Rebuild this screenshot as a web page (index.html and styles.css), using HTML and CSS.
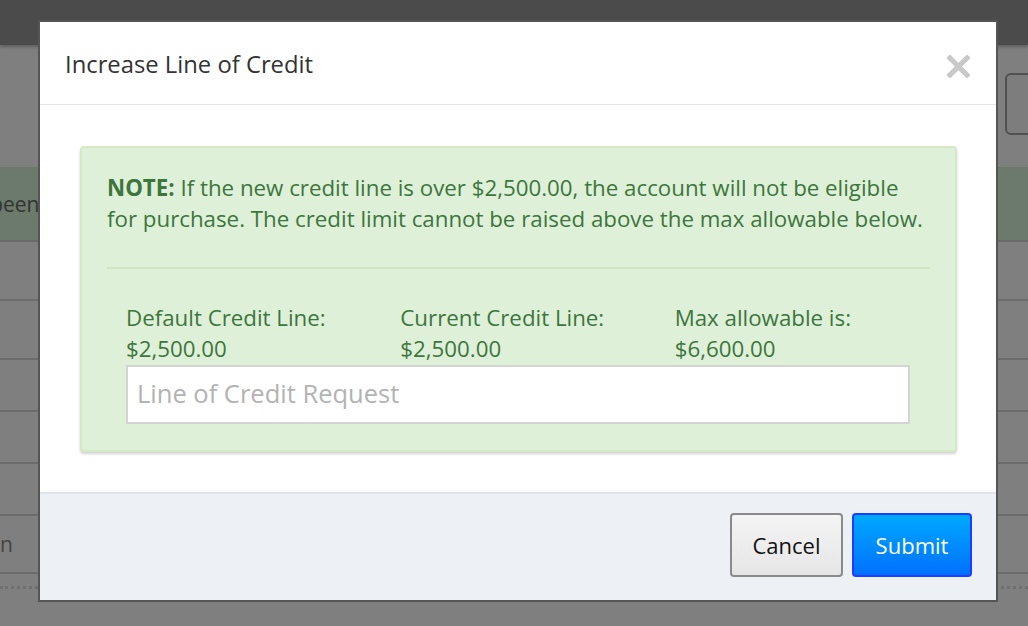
FILE: index.html
```html
<!DOCTYPE html>
<html lang="en">
<head>
<meta charset="utf-8">
<title>Increase Line of Credit</title>
<link rel="stylesheet" href="styles.css">
</head>
<body>
<div class="page">
  <div class="topbar"></div>
  <div class="page-main">
    <div class="page-tools"><span class="tool-btn"></span></div>
    <div class="page-flash"><span class="flash-text">Your request has been</span></div>
    <div class="page-table">
      <div class="trow r1"></div>
      <div class="trow r2"></div>
      <div class="trow r3"></div>
      <div class="trow r4"></div>
      <div class="trow r5"></div>
      <div class="trow r6"><span class="cell-text">Open</span></div>
      <div class="trow r7"></div>
    </div>
  </div>
</div>

<div class="modal" role="dialog" aria-labelledby="modal-title">
  <div class="modal-header">
    <h4 class="modal-title" id="modal-title">Increase Line of Credit</h4>
    <button class="close" type="button" aria-label="Close">
      <svg width="23" height="23" viewBox="0 0 23 23" aria-hidden="true">
        <path d="M3 3 L20 20 M20 3 L3 20" stroke="#c9c9c9" stroke-width="5.2" stroke-linecap="square" fill="none"/>
      </svg>
    </button>
  </div>
  <div class="modal-body">
    <div class="alert">
      <p class="note"><strong>NOTE:</strong> If the new credit line is over $2,500.00, the account will not be eligible for purchase. The credit limit cannot be raised above the max allowable below.</p>
      <hr class="divider">
      <div class="limits">
        <div class="limit"><div>Default Credit Line:</div><div>$2,500.00</div></div>
        <div class="limit"><div>Current Credit Line:</div><div>$2,500.00</div></div>
        <div class="limit"><div>Max allowable is:</div><div>$6,600.00</div></div>
      </div>
      <div class="field">
        <input class="form-control" type="text" placeholder="Line of Credit Request">
      </div>
    </div>
  </div>
  <div class="modal-footer">
    <button class="btn btn-default" type="button">Cancel</button>
    <button class="btn btn-primary" type="button">Submit</button>
  </div>
</div>
</body>
</html>
```

FILE: styles.css
```css
* { box-sizing: border-box; }
html, body { margin: 0; padding: 0; }
body {
  width: 1028px;
  height: 626px;
  overflow: hidden;
  background: #7f7f7f;
  font-family: "Open Sans", "DejaVu Sans", sans-serif;
  position: relative;
}

/* dimmed page behind the dialog */
.page { width: 1028px; height: 626px; }
.topbar {
  height: 45px;
  background: #4b4b4b;
  box-shadow: 0 2px 3px rgba(0,0,0,0.25);
}
.page-main { padding-top: 28px; }
.page-tools { height: 62px; display: flex; justify-content: flex-end; }
.tool-btn {
  width: 40px; height: 62px;
  margin-right: -17px;
  border: 2px solid #505050;
  border-radius: 6px;
  background: #7d7d7d;
}
.page-flash {
  margin-top: 32px;
  height: 75px;
  background: #6b7a6a;
  border-bottom: 2px solid #6a6a6a;
  display: flex; align-items: center;
  overflow: hidden;
}
.flash-text {
  color: #333;
  font-size: 21px;
  margin-left: -182px;
}
.trow { border-bottom: 2px solid #6c6c6c; }
.r1 { height: 59px; }
.r2 { height: 59px; }
.r3 { height: 52px; }
.r4 { height: 52px; }
.r5 { height: 52px; }
.r6 { height: 58px; display: flex; align-items: center; overflow: hidden; }
.r7 { height: 15px; border-bottom: 3px dotted #707070; }
.cell-text { color: #444; font-size: 21px; margin-left: -41px; }

/* dialog */
.modal {
  position: absolute;
  left: 38px;
  top: 20px;
  width: 960px;
  height: 582px;
  background: #fff;
  border: 2px solid #555;
  display: flex;
  flex-direction: column;
}
.modal-header {
  height: 83px;
  border-bottom: 1px solid #e5e5e5;
  display: flex;
  align-items: center;
  justify-content: space-between;
  padding: 0 26px 0 25px;
}
.modal-title {
  margin: 0;
  font-weight: normal;
  font-size: 23.8px;
  color: #333;
  padding-top: 1px;
}
.close {
  border: 0; background: none; padding: 0; margin: 6px 0 0 0;
  width: 23px; height: 23px; display: block;
}
.close svg { display: block; }

.modal-body {
  flex: 1;
  padding: 41px 39px 0 40px;
}
.alert {
  height: 306px;
  background: #dff0d8;
  border: 2px solid #d6e9c6;
  border-radius: 4px;
  box-shadow: 0 2px 3px rgba(0,0,0,0.18);
  padding: 24px 25px 0 25px;
  color: #3c763d;
}
.note {
  margin: 0;
  font-size: 22.3px;
  line-height: 31px;
}
.note strong { font-weight: bold; }
.divider {
  margin: 33px 0 0 0;
  border: 0;
  border-top: 2px solid #cfe5c2;
  height: 0;
}
.limits {
  margin-top: 33px;
  display: grid;
  grid-template-columns: repeat(3, 1fr);
}
.limit {
  padding-left: 19px;
  font-size: 22.3px;
  line-height: 31px;
}
.field { padding: 1px 20px 0 19px; }
.form-control {
  display: block;
  width: 100%;
  height: 59px;
  border: 2px solid #d4d4d4;
  background: #fff;
  padding: 0 9px 3px 9px;
  font-family: "Open Sans", "DejaVu Sans", sans-serif;
  font-size: 25.5px;
  color: #555;
  outline: none;
}
.form-control::placeholder { color: #b3b3b3; }

.modal-footer {
  height: 108px;
  background: #edf0f5;
  border-top: 2px solid #e1e5eb;
  display: flex;
  justify-content: flex-end;
  align-items: flex-start;
  gap: 9px;
  padding: 19px 24px 0 0;
}
.btn {
  height: 64px;
  border-radius: 4px;
  font-family: "Open Sans", "DejaVu Sans", sans-serif;
  font-size: 22px;
  padding: 0 20px;
  cursor: pointer;
}
.btn-default {
  width: 113px;
  color: #111;
  background: linear-gradient(#f4f4f4, #e6e6e6);
  border: 2px solid #8a8a8a;
}
.btn-primary {
  width: 120px;
  color: #fff;
  background: linear-gradient(#00a9ff, #0070ff);
  border: 2px solid #1f3dff;
}
```
